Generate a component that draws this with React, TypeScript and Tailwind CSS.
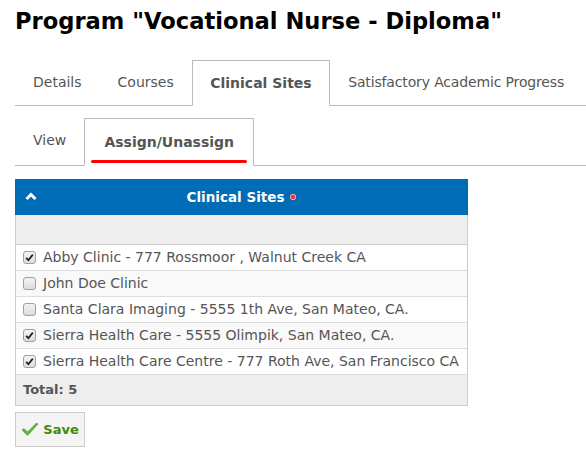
import React from 'react';

const SITES = [
  { name: 'Abby Clinic - 777 Rossmoor , Walnut Creek CA', checked: true },
  { name: 'John Doe Clinic', checked: false },
  { name: 'Santa Clara Imaging - 5555 1th Ave, San Mateo, CA.', checked: false },
  { name: 'Sierra Health Care - 5555 Olimpik, San Mateo, CA.', checked: true },
  { name: 'Sierra Health Care Centre - 777 Roth Ave, San Francisco CA', checked: true },
];

function Box({ checked }: { checked: boolean }) {
  return (
    <span className="w-[13px] h-[13px] rounded-[3px] border border-[#a0a0a0] bg-gradient-to-b from-[#f4f4f4] to-[#dcdcdc] flex items-center justify-center shrink-0">
      {checked && (
        <svg width="9" height="9" viewBox="0 0 9 9">
          <path d="M1.2 4.8 L3.4 7.2 L7.8 1.6" fill="none" stroke="#222" strokeWidth="1.8" />
        </svg>
      )}
    </span>
  );
}

export default function App() {
  const [sites, setSites] = React.useState(SITES);

  const toggle = (i: number) => {
    setSites(prev => prev.map((s, j) => (j === i ? { ...s, checked: !s.checked } : s)));
  };

  return (
    <div className="w-[586px] h-[460px] bg-white overflow-hidden px-[15px] pt-[8px] text-[#555] font-['DejaVu_Sans',Verdana,sans-serif]">
      <h1 className="text-[22.6px] leading-[26px] font-bold text-black whitespace-nowrap">Program "Vocational Nurse - Diploma"</h1>

      {/* main tabs */}
      <div className="flex mt-[26px] h-[46px] border-b border-[#bbb] mr-[-15px] text-[14px] whitespace-nowrap">
        <div className="px-[18px] flex items-center shrink-0">Details</div>
        <div className="px-[18px] flex items-center shrink-0">Courses</div>
        <div className="px-[17.5px] flex items-center shrink-0 font-bold border border-[#bbb] border-b-white mb-[-1px] bg-white">Clinical Sites</div>
        <div className="px-[18px] flex items-center shrink-0 tracking-[-0.15px]">Satisfactory Academic Progress</div>
      </div>

      {/* sub tabs */}
      <div className="flex mt-[12px] h-[48px] border-b border-[#bbb] mr-[-15px] text-[14px] whitespace-nowrap">
        <div className="px-[18px] flex items-center pb-[2px]">View</div>
        <div className="relative w-[170px] flex items-center justify-center font-bold border border-[#bbb] border-b-white mb-[-1px] bg-white">
          Assign/Unassign
          <span className="absolute left-[6px] right-[6px] bottom-[2px] h-[3px] rounded-full bg-[#f00]" />
        </div>
      </div>

      {/* table */}
      <div className="mt-[13px] w-[453px] text-[14px]">
        <div className="h-[36px] bg-[#006cb5] relative flex items-center justify-center text-white font-bold text-[13.5px]">
          <svg className="absolute left-[10px] top-[13px]" width="12" height="9" viewBox="0 0 12 9">
            <path d="M1.5 7 L6 2.5 L10.5 7" fill="none" stroke="#fff" strokeWidth="3" />
          </svg>
          <span>Clinical Sites</span>
          <span className="ml-[6px] w-[6px] h-[6px] rounded-[2px] bg-[#e8364a] border border-[#f7a0a8]" />
        </div>
        <div className="border-x border-b border-[#ccc]">
          <div className="h-[30px] bg-[#eee] border-b border-[#ccc]" />
          {sites.map((s, i) => (
            <label
              key={i}
              onClick={() => toggle(i)}
              className={`h-[26px] flex items-center gap-[7px] pl-[7px] border-b border-[#ddd] cursor-pointer ${i % 2 === 1 ? 'bg-[#f9f9f9]' : 'bg-white'}`}
            >
              <Box checked={s.checked} />
              <span className="whitespace-nowrap">{s.name}</span>
            </label>
          ))}
          <div className="h-[30px] bg-[#eee] flex items-center pl-[7px] font-bold text-[13px]">Total: {sites.length}</div>
        </div>
      </div>

      <button className="mt-[6px] h-[35px] w-[70px] border border-[#ccc] bg-[#f4f4f4] flex items-center justify-center gap-[4px] text-[13px] font-bold text-[#3e8a0c]">
        <svg width="18" height="15" viewBox="0 0 18 15">
          <path d="M1 8 L6.5 13.5 L17 2 L15.5 1 L6.5 10 L3 6.5 Z" fill="#5cb63a" stroke="#4a9a2a" strokeWidth="0.6" strokeLinejoin="round" />
        </svg>
        Save
      </button>
    </div>
  );
}
